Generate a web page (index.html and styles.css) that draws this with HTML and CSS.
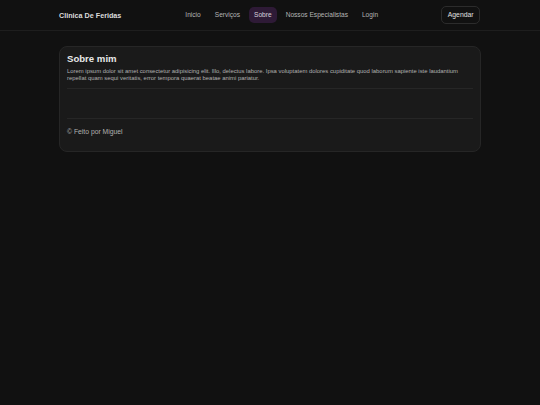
FILE: index.html
```html
<!DOCTYPE html>
<html lang="pt">
<head>
  <meta charset="UTF-8">
  <meta name="viewport" content="width=device-width, initial-scale=1.0">
  <title>Clinica De Feridas - Sobre</title>
  <link rel="stylesheet" href="styles.css">
</head>
<body>
  <header class="site-header">
    <div class="container header-inner">
      <a class="brand" href="#">Clinica De Feridas</a>
      <nav class="main-nav">
        <a class="nav-link" href="#">Inicio</a>
        <a class="nav-link" href="#">Serviços</a>
        <a class="nav-link active" href="#">Sobre</a>
        <a class="nav-link" href="#">Nossos Especialistas</a>
        <a class="nav-link" href="#">Login</a>
      </nav>
      <a class="btn-outline" href="#">Agendar</a>
    </div>
  </header>

  <main class="container">
    <section class="card">
      <h1 class="card-title">Sobre mim</h1>
      <p class="card-text">Lorem ipsum dolor sit amet consectetur adipisicing elit. Illo, delectus labore. Ipsa voluptatem dolores cupiditate quod laborum sapiente iste laudantium repellat quam sequi veritatis, error tempora quaerat beatae animi pariatur.</p>
      <div class="card-body"></div>
      <footer class="card-footer">© Feito por Miguel</footer>
    </section>
  </main>
</body>
</html>
```

FILE: styles.css
```css
:root {
  --bg: #111111;
  --card-bg: #1a1a1a;
  --border: #262626;
  --text-primary: #e8e8e8;
  --text-secondary: #b0b0b0;
  --accent-bg: #2e1a36;
}

* {
  margin: 0;
  padding: 0;
  box-sizing: border-box;
}

body {
  font-family: "Liberation Sans", Arial, sans-serif;
  background: var(--bg);
  color: var(--text-primary);
  min-height: 100vh;
}

a {
  color: inherit;
  text-decoration: none;
}

.container {
  width: 422px;
  margin: 0 auto;
}

.site-header {
  border-bottom: 1px solid #1e1e1e;
}

.header-inner {
  height: 30px;
  display: flex;
  align-items: center;
}

.brand {
  font-size: 7.2px;
  font-weight: 700;
  color: #dcdcdc;
}

.main-nav {
  display: flex;
  align-items: center;
  gap: 4px;
  margin-left: 59px;
}

.nav-link {
  font-size: 6.6px;
  line-height: 8px;
  color: #b5b5b5;
  padding: 4px 5px;
  border-radius: 5px;
}

.nav-link.active {
  background: var(--accent-bg);
  color: #d8d0dc;
}

.btn-outline {
  margin-left: auto;
  margin-right: 1px;
  font-size: 6.8px;
  line-height: 8px;
  color: #e0e0e0;
  padding: 4px 5.5px;
  border: 1px solid #2c2c2c;
  border-radius: 5px;
}

main.container {
  padding-top: 15px;
}

.card {
  background: var(--card-bg);
  border: 1px solid var(--border);
  border-radius: 8px;
  padding: 6px 7px 16px;
}

.card-title {
  font-size: 9.6px;
  line-height: 12px;
  font-weight: 700;
  color: var(--text-primary);
  margin-bottom: 3px;
}

.card-text {
  font-size: 5.9px;
  line-height: 7px;
  color: var(--text-secondary);
  padding-bottom: 6px;
  border-bottom: 1px solid var(--border);
}

.card-body {
  height: 30px;
  border-bottom: 1px solid var(--border);
}

.card-footer {
  font-size: 6.8px;
  color: var(--text-secondary);
  padding-top: 9px;
}
```
